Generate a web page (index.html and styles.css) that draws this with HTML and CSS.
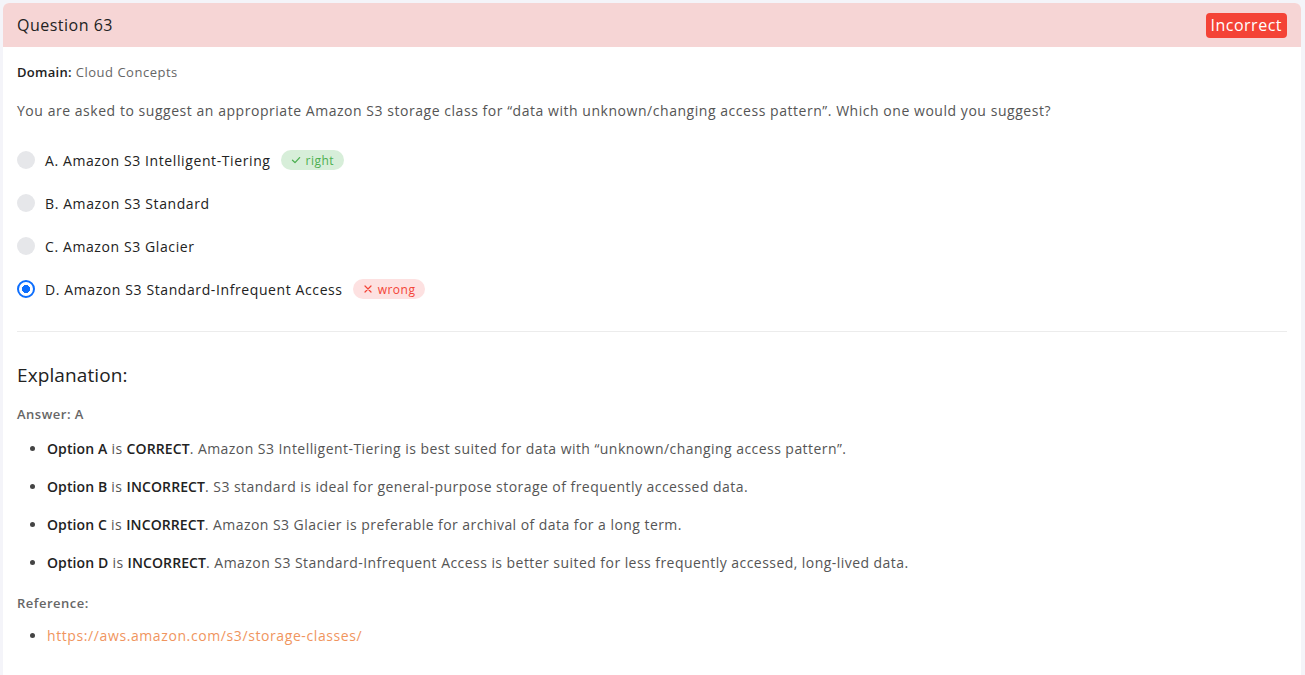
FILE: index.html
```html
<!DOCTYPE html>
<html lang="en">
<head>
<meta charset="utf-8">
<title>Question 63</title>
<link rel="stylesheet" href="styles.css">
</head>
<body>
<div class="card">
  <div class="card-header">
    <span class="title">Question 63</span>
    <span class="status">Incorrect</span>
  </div>
  <div class="card-body">
    <p class="domain"><span class="domain-label">Domain:</span> Cloud Concepts</p>
    <p class="question">You are asked to suggest an appropriate Amazon S3 storage class for “data with unknown/changing access pattern”. Which one would you suggest?</p>
    <ul class="options">
      <li class="option"><span class="radio"></span><span class="label">A. Amazon S3 Intelligent-Tiering</span><span class="tag tag-right"><svg width="10" height="10" viewBox="0 0 10 10"><path d="M1.5 5.2 L4 7.6 L8.6 2.6" fill="none" stroke="currentColor" stroke-width="1.3" stroke-linecap="round" stroke-linejoin="round"/></svg>right</span></li>
      <li class="option"><span class="radio"></span><span class="label">B. Amazon S3 Standard</span></li>
      <li class="option"><span class="radio"></span><span class="label">C. Amazon S3 Glacier</span></li>
      <li class="option"><span class="radio radio-checked"></span><span class="label">D. Amazon S3 Standard-Infrequent Access</span><span class="tag tag-wrong"><svg width="10" height="10" viewBox="0 0 10 10"><path d="M2 2 L8 8 M8 2 L2 8" fill="none" stroke="currentColor" stroke-width="1.2" stroke-linecap="round"/></svg>wrong</span></li>
    </ul>
    <hr class="divider">
    <h2 class="expl-title">Explanation:</h2>
    <p class="sub">Answer: A</p>
    <ul class="bullets">
      <li><b>Option A</b> is <b>CORRECT</b>. Amazon S3 Intelligent-Tiering is best suited for data with “unknown/changing access pattern”.</li>
      <li><b>Option B</b> is <b>INCORRECT</b>. S3 standard is ideal for general-purpose storage of frequently accessed data.</li>
      <li><b>Option C</b> is <b>INCORRECT</b>. Amazon S3 Glacier is preferable for archival of data for a long term.</li>
      <li><b>Option D</b> is <b>INCORRECT</b>. Amazon S3 Standard-Infrequent Access is better suited for less frequently accessed, long-lived data.</li>
    </ul>
    <p class="sub">Reference:</p>
    <ul class="bullets refs">
      <li><a href="#">https://aws.amazon.com/s3/storage-classes/</a></li>
    </ul>
  </div>
</div>
</body>
</html>
```
FILE: styles.css
```css
html, body {
  margin: 0;
  padding: 0;
}
body {
  background: #f4f4f9;
  font-family: "Open Sans", "Liberation Sans", sans-serif;
  color: #555;
  letter-spacing: 0.5px;
  overflow: hidden;
}
.card {
  margin: 3px 4px 0 3px;
  background: #fff;
  border-radius: 6px 6px 0 0;
  min-height: 680px;
}
.card-header {
  height: 44px;
  background: #f6d5d5;
  border-radius: 6px 6px 0 0;
  display: flex;
  align-items: center;
  justify-content: space-between;
  padding: 0 14px;
}
.title {
  font-size: 16px;
  color: #222;
  font-weight: 500;
}
.status {
  background: #f44336;
  color: #fff;
  font-size: 16px;
  line-height: 25px;
  padding: 0 5px;
  border-radius: 4px;
  font-weight: 500;
}
.card-body {
  padding: 0 14px;
  display: flow-root;
}
p { margin: 0; }
.domain {
  margin-top: 15px;
  font-size: 13px;
  line-height: 20px;
  color: #666;
}
.domain-label {
  color: #222;
  font-weight: 600;
  letter-spacing: 0.3px;
}
.question {
  margin-top: 19px;
  font-size: 14px;
  line-height: 20px;
  color: #555;
  letter-spacing: 0.54px;
}
.options {
  list-style: none;
  margin: 28px 0 0;
  padding: 0;
  display: flex;
  flex-direction: column;
  gap: 21px;
}
.option {
  display: flex;
  align-items: center;
  height: 22px;
}
.radio {
  width: 18px;
  height: 18px;
  border-radius: 50%;
  background: #e6e7ea;
  box-sizing: border-box;
  flex: none;
  margin-right: 10px;
}
.radio-checked {
  background: radial-gradient(circle, #0d6efd 0 3.8px, #fff 4.3px);
  border: 2px solid #0d6efd;
}
.label {
  font-size: 14px;
  color: #222;
  font-weight: 500;
  letter-spacing: 0.6px;
}
.tag {
  display: inline-flex;
  align-items: center;
  gap: 5px;
  height: 20px;
  padding: 0 10px;
  border-radius: 10px;
  font-size: 12px;
  margin-left: 10px;
}
.tag-right {
  background: #d7eed9;
  color: #4caf50;
}
.tag-wrong {
  background: #fde1e1;
  color: #f44336;
}
.divider {
  margin: 31px 0 0;
  border: 0;
  border-top: 1px solid #ececec;
}
.expl-title {
  margin: 30px 0 0;
  font-size: 19px;
  line-height: 26px;
  font-weight: 500;
  color: #222;
  letter-spacing: 0.1px;
}
.sub {
  margin-top: 16px;
  font-size: 13px;
  line-height: 20px;
  font-weight: 600;
  color: #666;
}
.bullets {
  margin: 14px 0 0;
  padding-left: 30px;
  display: flex;
  flex-direction: column;
  gap: 16px;
}
.bullets li {
  font-size: 14px;
  line-height: 22px;
  color: #555;
  letter-spacing: 0.45px;
}
.bullets li::marker {
  color: #444;
}
.bullets b {
  font-weight: 600;
  color: #222;
  letter-spacing: 0.1px;
}
.bullets + .sub {
  margin-top: 19px;
}
.refs {
  margin-top: 12px;
}
.refs a {
  color: #f0955e;
  text-decoration: none;
  letter-spacing: 0.6px;
}
```
